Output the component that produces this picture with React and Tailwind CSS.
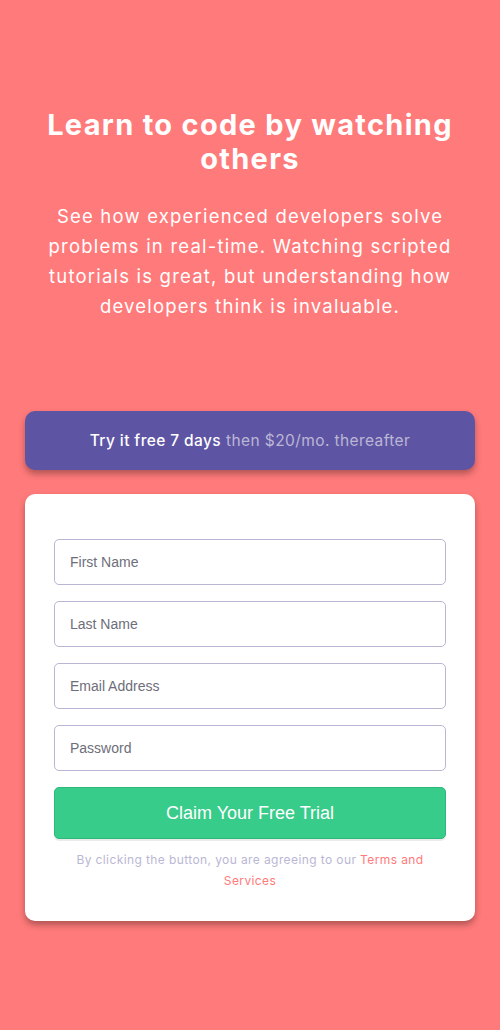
import React from "react";

const fields = ["First Name", "Last Name", "Email Address", "Password"];

const App = () => {
  return (
    <div className="min-h-screen bg-[#ff7a7a] px-[25px] pt-[108px] pb-[110px] font-['Inter',sans-serif] text-white">
      <div className="text-center">
        <h1 className="text-[29px] leading-[34px] font-bold tracking-[1.3px]">
          Learn to code by watching others
        </h1>
        <p className="mx-auto mt-[25px] w-[440px] text-[18.5px] leading-[30px] tracking-[1.2px]">
          See how experienced developers solve problems in real-time. Watching scripted tutorials is great, but understanding how developers think is invaluable.
        </p>
      </div>

      <div className="mt-[90px] h-[59px] flex items-center justify-center rounded-[10px] bg-[#5e54a4] text-[15.5px] tracking-[0.4px] shadow-[0_4px_6px_rgba(0,0,0,0.3)]">
        <span className="font-medium">Try it free 7 days</span>
        <span className="ml-[5px] text-[#bab7d4]">then $20/mo. thereafter</span>
      </div>

      <div className="mt-[24px] rounded-[10px] bg-white px-[29px] pt-[45px] pb-[30px] shadow-[0_4px_6px_rgba(0,0,0,0.3)]">
        <div className="flex flex-col gap-[16px]">
          {fields.map((f) => (
            <input
              key={f}
              placeholder={f}
              className="h-[46px] w-full rounded-[5px] border border-[#b9b6d3] px-[15px] text-[14px] font-['Liberation_Sans',sans-serif] text-[#3d3b48] placeholder:text-[#6e6e7a] outline-none"
            />
          ))}
          <button className="h-[52px] w-full rounded-[5px] bg-[#38cc8b] border border-[#2fb87c] text-[18px] font-['Liberation_Sans',sans-serif] text-white shadow-[0_2px_0_rgba(0,0,0,0.08)]">
            Claim Your Free Trial
          </button>
        </div>
        <p className="mx-auto mt-[10px] w-[360px] text-center text-[12px] leading-[21px] tracking-[0.4px] text-[#bab7d4]">
          By clicking the button, you are agreeing to our{" "}
          <span className="text-[#ff7a7a]">Terms and Services</span>
        </p>
      </div>
    </div>
  );
};

export default App;
